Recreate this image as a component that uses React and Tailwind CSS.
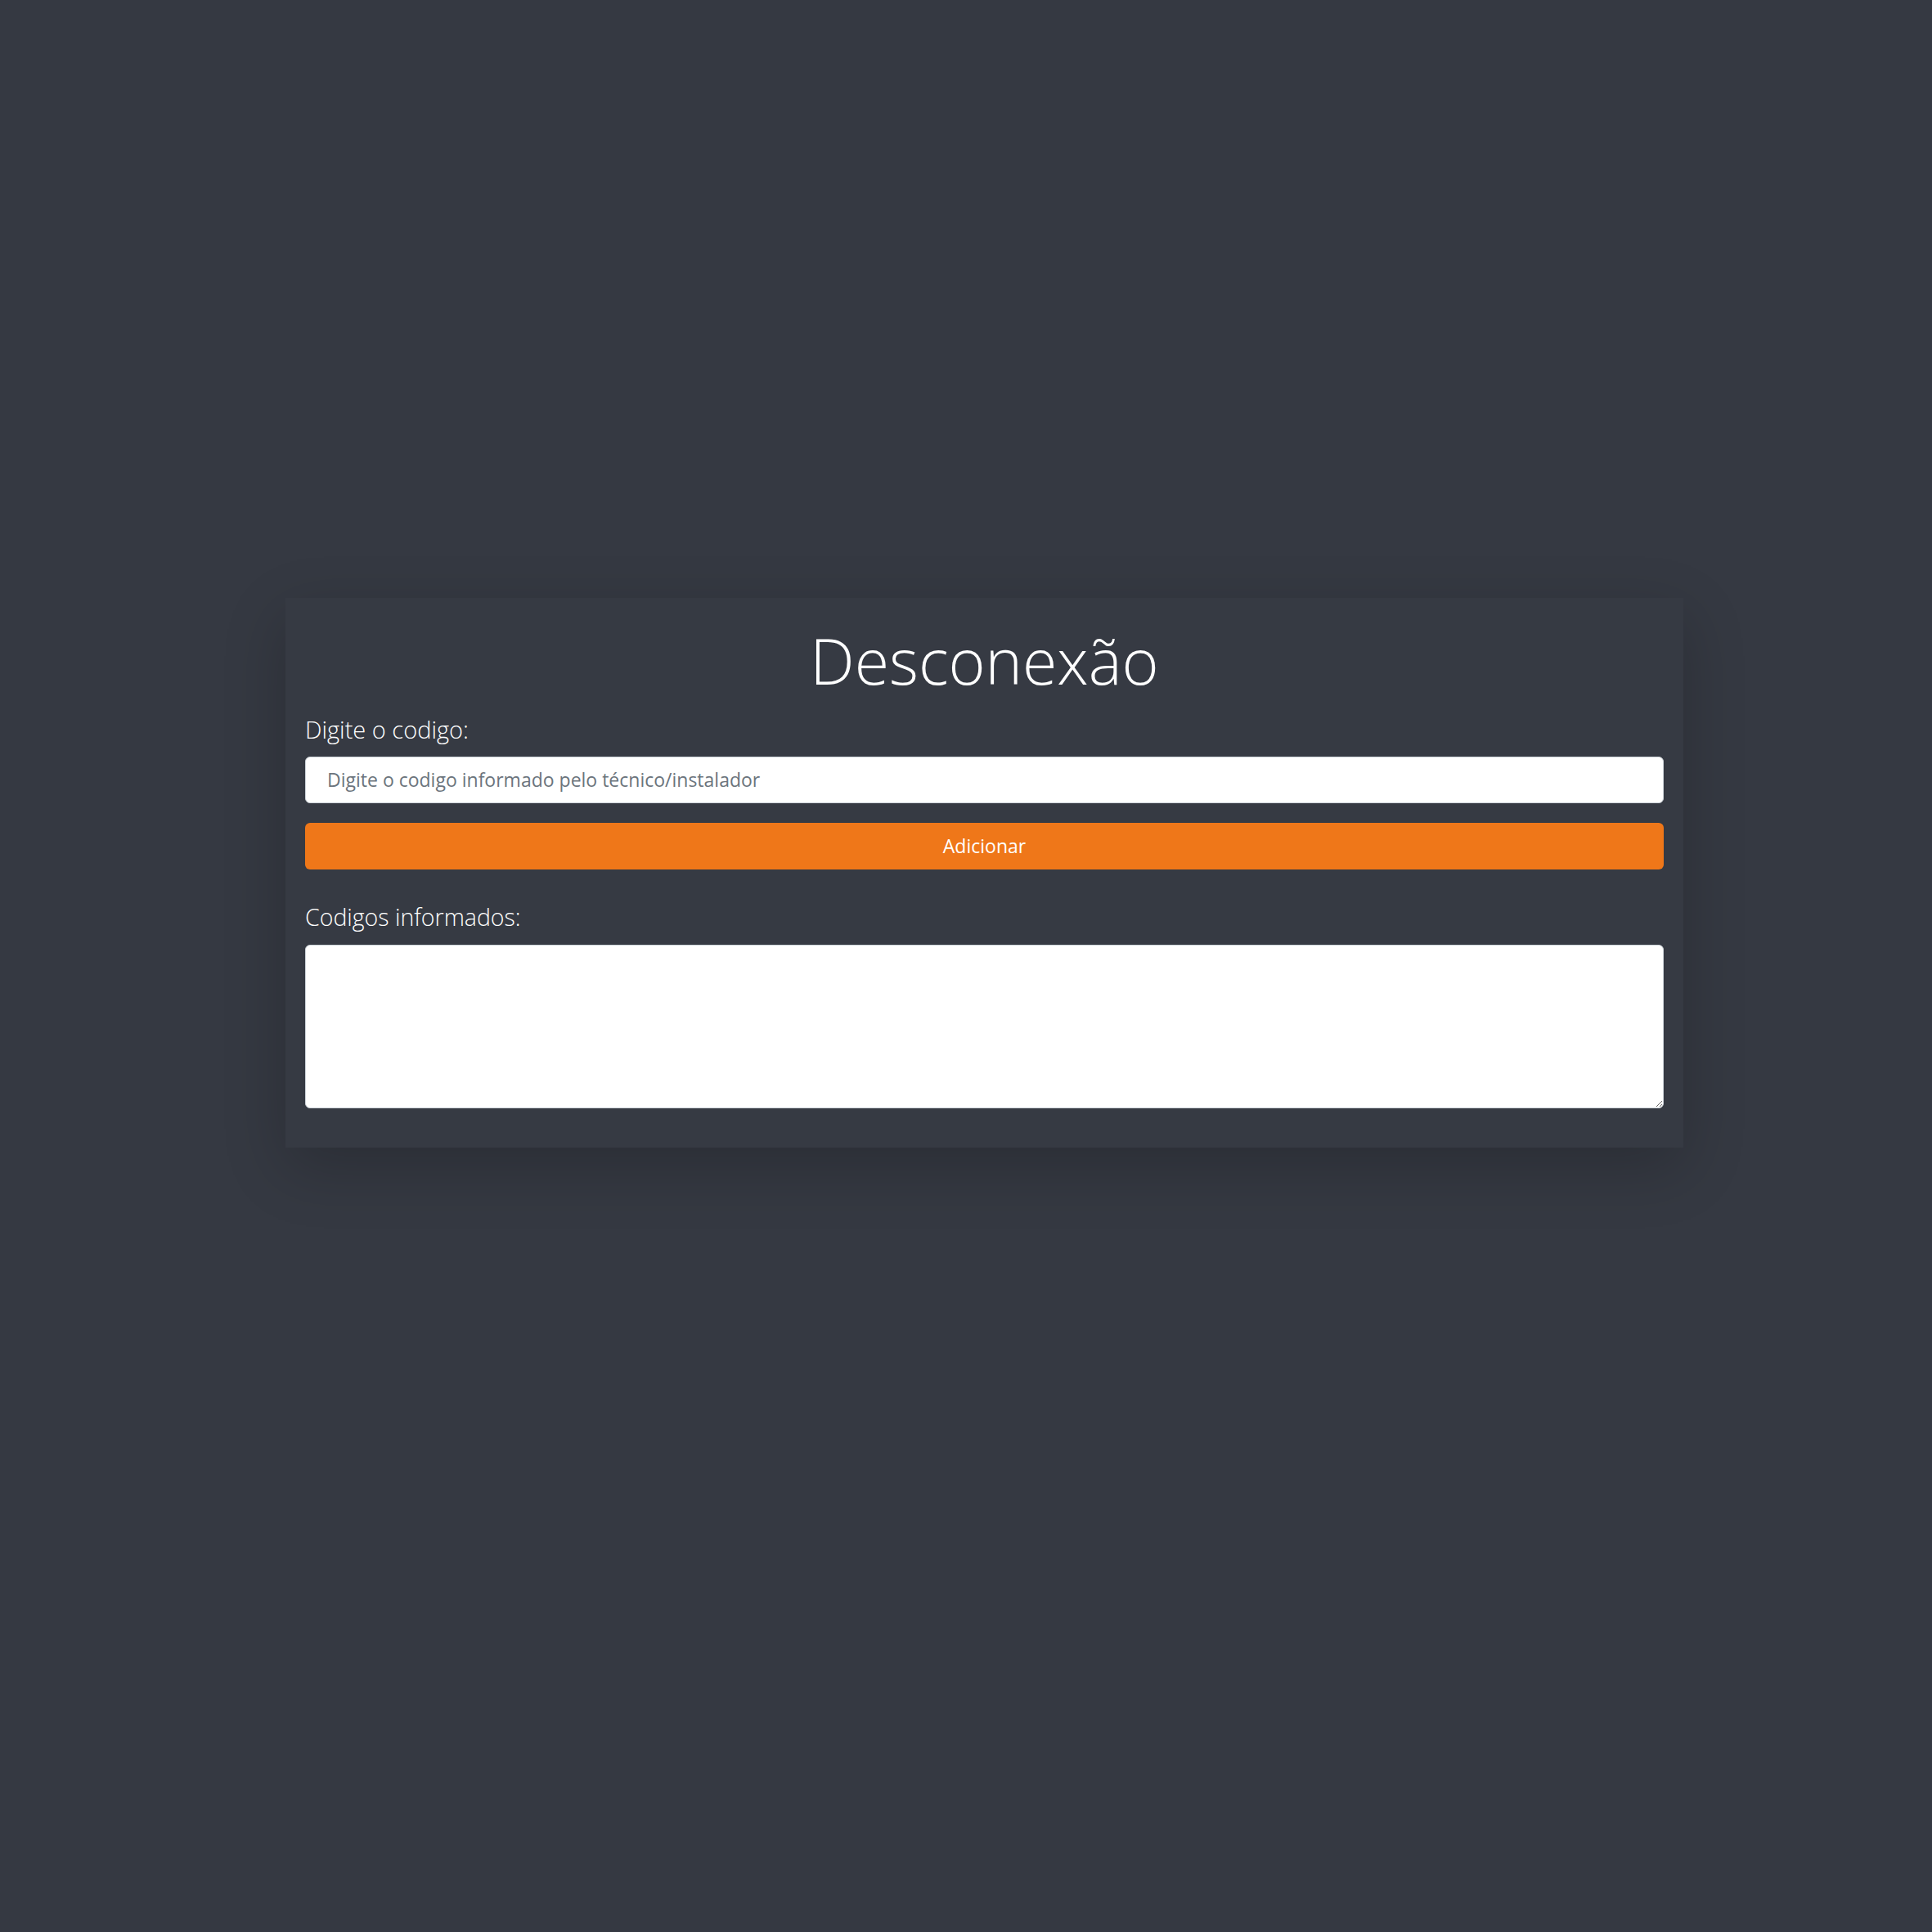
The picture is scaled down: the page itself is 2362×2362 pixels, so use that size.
import React, { useState } from 'react';

const App = () => {
  const [codigo, setCodigo] = useState('');
  const [lista, setLista] = useState('');

  const handleAdd = () => {
    if (!codigo.trim()) return;
    setLista((prev) => (prev ? prev + '\n' + codigo.trim() : codigo.trim()));
    setCodigo('');
  };

  return (
    <div
      className="min-h-screen bg-[#353942] pt-[731px] pl-[349px]"
      style={{ fontFamily: '"Open Sans", "Noto Sans", sans-serif' }}
    >
      <div className="w-[1709px] bg-[#363a43] px-6 pt-[31px] pb-12 shadow-[0_24px_72px_rgba(0,0,0,0.2)]">
        <h1 className="text-center text-[77px] font-light leading-[1.2] text-white">
          Desconexão
        </h1>

        <label className="mt-[16px] block text-[29px] font-light leading-[1.5] text-white">
          Digite o codigo:
        </label>
        <input
          type="text"
          value={codigo}
          onChange={(e) => setCodigo(e.target.value)}
          placeholder="Digite o codigo informado pelo técnico/instalador"
          className="mt-[11px] block h-[57px] w-full rounded-[6px] border border-[#ced4da] bg-white pl-[26px] pr-4 text-[23px] text-[#495057] outline-none placeholder:text-[#6c757d]"
        />

        <button
          type="button"
          onClick={handleAdd}
          className="mt-[24px] block h-[57px] w-full rounded-[6px] bg-[#ef7719] text-[23px] text-white"
        >
          Adicionar
        </button>

        <label className="mt-[37px] block text-[28.5px] font-light leading-[1.5] text-white">
          Codigos informados:
        </label>
        <textarea
          value={lista}
          onChange={(e) => setLista(e.target.value)}
          className="mt-[12px] block h-[200px] w-full rounded-[6px] border border-[#ced4da] bg-white px-4 py-2 text-[23px] text-[#495057] outline-none"
        />
      </div>
    </div>
  );
};

export default App;
